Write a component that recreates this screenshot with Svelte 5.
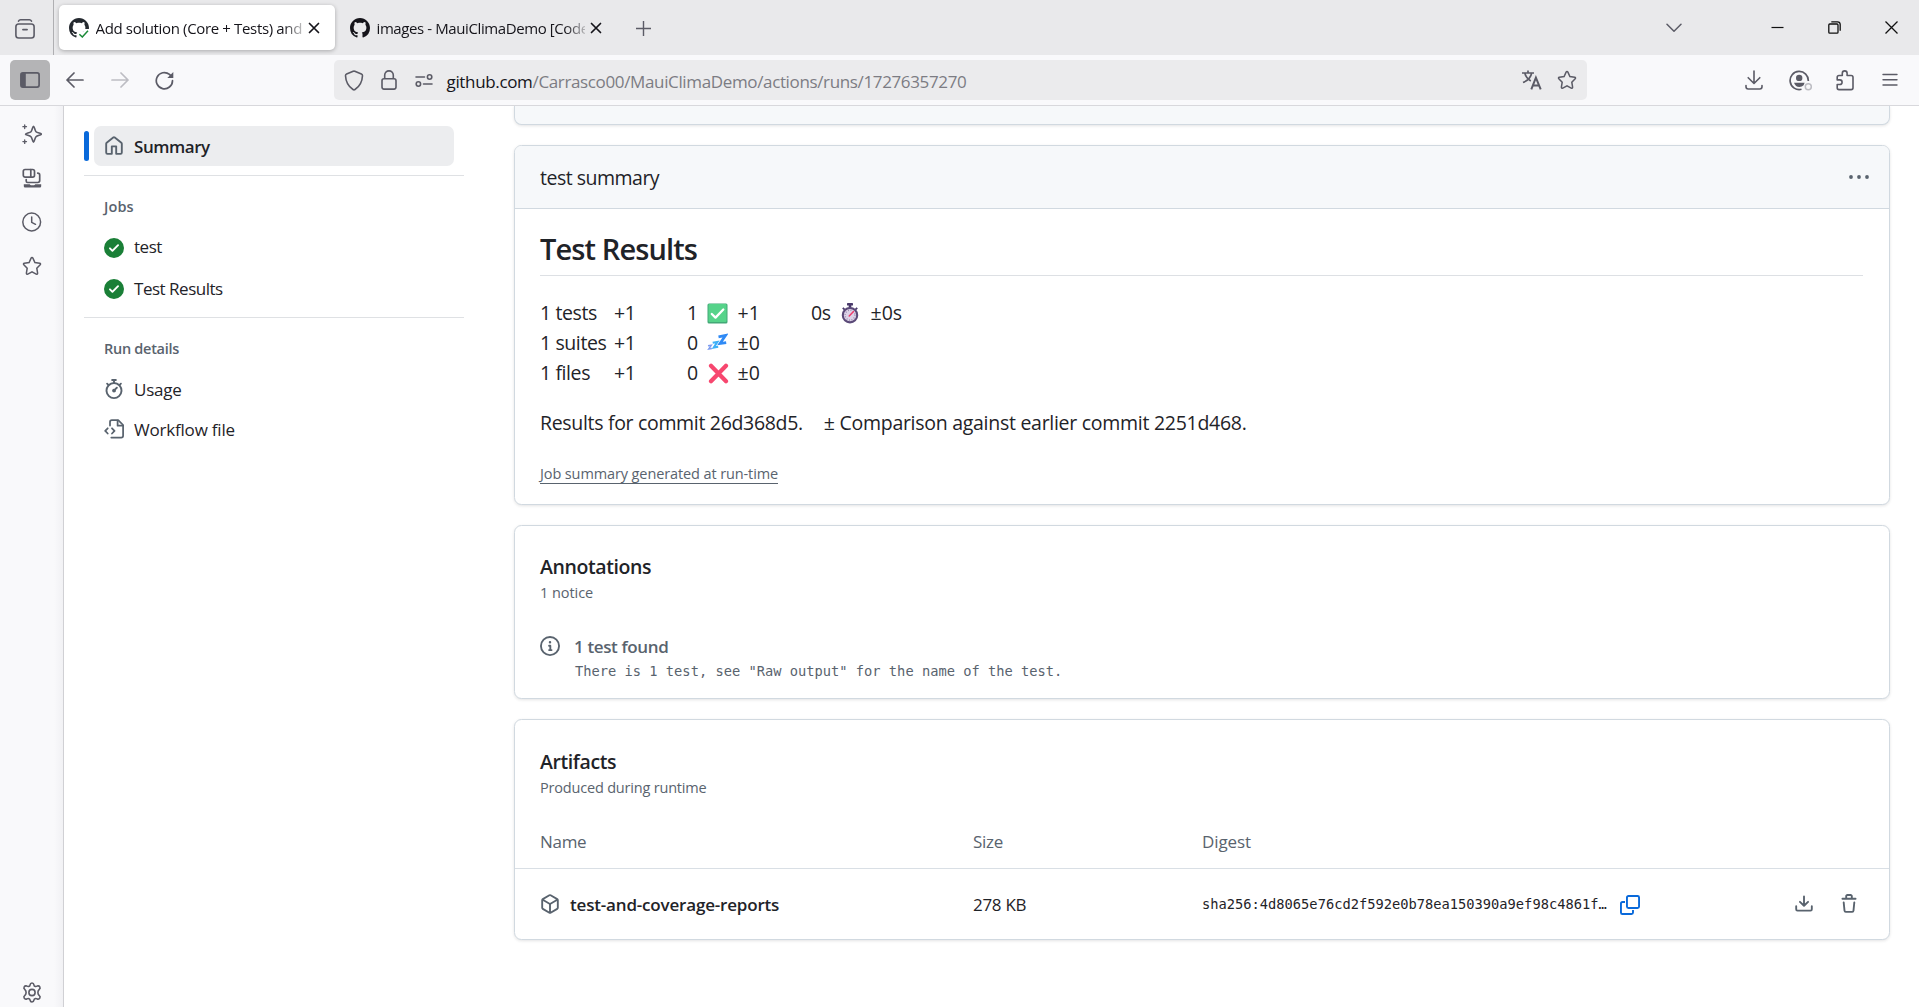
<script>
  const jobs = ['test', 'Test Results'];
  const results = [
    { label: '1 tests', delta: '+1', count: '1', icon: 'check', diff: '+1' },
    { label: '1 suites', delta: '+1', count: '0', icon: 'zzz', diff: '±0' },
    { label: '1 files', delta: '+1', count: '0', icon: 'cross', diff: '±0' }
  ];
  const starPath =
    'M10 1.6c.4 0 .7.2.9.6l2 4.3 4.8.7c.8.1 1.1 1 .5 1.6l-3.4 3.4.8 4.9c.1.8-.7 1.3-1.4 1L10 15.8l-4.2 2.3c-.7.3-1.5-.2-1.4-1l.8-4.9L1.8 8.8c-.6-.6-.3-1.5.5-1.6l4.8-.7 2-4.3c.2-.4.5-.6.9-.6z';
  const markPath =
    'M8 0c4.42 0 8 3.58 8 8a8.013 8.013 0 0 1-5.45 7.59c-.4.08-.55-.17-.55-.38 0-.27.01-1.13.01-2.2 0-.75-.25-1.23-.54-1.48 1.78-.2 3.65-.88 3.65-3.95 0-.88-.31-1.59-.82-2.15.08-.2.36-1.02-.08-2.12 0 0-.67-.22-2.2.82-.64-.18-1.32-.27-2-.27-.68 0-1.36.09-2 .27-1.53-1.03-2.2-.82-2.2-.82-.44 1.1-.16 1.92-.08 2.12-.51.56-.82 1.28-.82 2.15 0 3.06 1.86 3.75 3.64 3.95-.23.2-.44.55-.51 1.07-.46.21-1.61.55-2.33-.66-.15-.24-.6-.83-1.23-.82-.67.01-.27.38.01.53.34.19.73.9.82 1.13.16.45.68 1.31 2.69.94 0 .67.01 1.3.01 1.49 0 .21-.15.45-.55.38A7.995 7.995 0 0 1 0 8c0-4.42 3.58-8 8-8Z';
</script>

{#snippet closeX()}
  <svg class="tab-close" width="12" height="12" viewBox="0 0 12 12" fill="none" stroke="#15141a" stroke-width="1.7" stroke-linecap="round">
    <path d="M1.5 1.5l9 9M10.5 1.5l-9 9" />
  </svg>
{/snippet}

{#snippet emoji(name)}
  {#if name === 'check'}
    <svg width="21" height="21" viewBox="0 0 21 21">
      <rect x=".5" y=".5" width="20" height="20" rx="1.5" fill="#43a877" />
      <rect x="1.5" y="1" width="18" height="18" rx="1" fill="#56d38a" />
      <path d="M4.8 11l3.700 3.600L16.300 6.500" fill="none" stroke="#fff" stroke-width="2.3" stroke-linecap="round" stroke-linejoin="round" />
    </svg>
  {:else if name === 'zzz'}
    <svg width="21" height="21" viewBox="0 0 21 21" fill="none" stroke-linejoin="miter">
      <path d="M11.500 3.900l7-1.400-5.500 8 6.200-.9" stroke="#2f8af5" stroke-width="2.700" />
      <path d="M5.700 9.800l4.700-.9-3.600 5.600 4.400-.7" stroke="#3fb0f7" stroke-width="2.100" />
      <path d="M1 12.800l3.200-.5-2.500 3.700 3.200-.4" stroke="#7d9df0" stroke-width="1.500" />
    </svg>
  {:else if name === 'cross'}
    <svg class="cross" width="21" height="21" viewBox="0 0 21 21" fill="none" stroke="#f7476f" stroke-width="4.2" stroke-linecap="round">
      <path d="M3 2.800l15 15.500M18 2.800l-15 15.500" />
    </svg>
  {:else}
    <svg width="18" height="21" viewBox="0 0 18 21">
      <rect x="6" y="0" width="6" height="2.6" rx=".6" fill="#4a3a6b" />
      <rect x="7.7" y="2" width="2.6" height="3" fill="#4a3a6b" />
      <path d="M1.800 4.800l2 2M16.200 4.800l-2 2" stroke="#4a3a6b" stroke-width="1.8" />
      <circle cx="9" cy="12.2" r="7.2" fill="#ddd3e8" stroke="#5b4a78" stroke-width="2.100" />
      <circle cx="9" cy="12.2" r="4.9" fill="none" stroke="#8d7fa3" stroke-width="1.3" stroke-dasharray=".8 1.766" />
      <path d="M8.200 13L12.500 8.600" stroke="#ee3d6b" stroke-width="1.5" stroke-linecap="round" />
    </svg>
  {/if}
{/snippet}

<div class="window">
  <header class="tabbar">
    <div class="view-slot">
      <svg width="20" height="20" viewBox="0 0 20 20" fill="none" stroke="#5b5b66" stroke-width="1.6" stroke-linecap="round">
        <path d="M3.500 2.200q.8-1.400 2-1.400h9q1.200 0 2 1.400" />
        <rect x=".9" y="5" width="18.2" height="14" rx="2.8" />
        <path d="M8 10.600h4" stroke-width="1.9" />
      </svg>
    </div>
    <div class="tab active">
      <svg class="favicon" width="20" height="20" viewBox="0 0 20 20">
        <g transform="scale(1.25)"><path d={markPath} fill="#24292f" /></g>
        <path d="M11 20V13.500h3.500V11H20v9z" fill="#fff" />
        <path d="M10.400 16.300l2.900 2.700 5.700-6.200" fill="none" stroke="#1a8a37" stroke-width="1.5" />
      </svg>
      <span class="tab-label">Add solution (Core + Tests) and</span>
      {@render closeX()}
    </div>
    <div class="tab other">
      <svg class="favicon" width="20" height="20" viewBox="0 0 16 16"><path d={markPath} fill="#15141a" /></svg>
      <span class="tab-label second">images - MauiClimaDemo [Code</span>
      {@render closeX()}
    </div>
    <svg class="new-tab" width="15" height="15" viewBox="0 0 15 15" stroke="#5b5b66" stroke-width="1.4"><path d="M7.500 0v15M0 7.500h15" /></svg>
    <div class="window-controls">
      <svg class="chevron" width="16" height="10" viewBox="0 0 16 10" fill="none" stroke="#5b5b66" stroke-width="1.5" stroke-linecap="round" stroke-linejoin="round"><path d="M1 1.300l7 7 7-7" /></svg>
      <svg width="13" height="13" viewBox="0 0 13 13" stroke="#111" stroke-width="1.2"><path d="M.5 6.500h12" /></svg>
      <svg width="13" height="13" viewBox="0 0 13 13" fill="none" stroke="#111" stroke-width="1.3">
        <rect x=".8" y="3" width="9.2" height="9.2" rx="1" />
        <path d="M3.300.8h6.200q2.700 0 2.700 2.700v6.200" />
      </svg>
      <svg width="13" height="13" viewBox="0 0 13 13" stroke="#111" stroke-width="1.3"><path d="M.5.5l12 12M12.500.5l-12 12" /></svg>
    </div>
  </header>

  <nav class="navbar">
    <button class="side-toggle" aria-label="Sidebar">
      <svg width="20" height="16" viewBox="0 0 20 16">
        <rect x=".9" y=".9" width="18.2" height="14.2" rx="2" fill="none" stroke="#5b5b66" stroke-width="1.7" />
        <path d="M1 1h4.800v14H1z" fill="#5b5b66" />
      </svg>
    </button>
    <svg class="back" width="18" height="16" viewBox="0 0 18 16" fill="none" stroke="#5b5b66" stroke-width="1.7" stroke-linecap="round" stroke-linejoin="round"><path d="M8 1L1 8l7 7M1 8h16" /></svg>
    <svg class="forward" width="18" height="16" viewBox="0 0 18 16" fill="none" stroke="#bdbdc3" stroke-width="1.7" stroke-linecap="round" stroke-linejoin="round"><path d="M10 1l7 7-7 7M17 8H1" /></svg>
    <svg class="reload" width="19" height="19" viewBox="0 0 19 19" fill="none" stroke="#5b5b66" stroke-width="1.7" stroke-linecap="round">
      <path d="M17.500 9.700a8.100 8.100 0 1 1-3-6.300l2 2" />
      <path d="M18.300 1v6h-6z" fill="#5b5b66" stroke="none" />
    </svg>
    <div class="urlbar">
      <svg class="shield" width="20" height="21" viewBox="0 0 20 21" fill="none" stroke="#5b5b66" stroke-width="1.6" stroke-linejoin="round">
        <path d="M10 1.100c.3 0 .5.1.8.2l6.600 2.800c.7.3 1.100.9 1.100 1.600C18.200 12 15.500 16.500 11 19.500c-.6.4-1.400.4-2 0C4.500 16.500 1.800 12 1.500 5.700c0-.7.4-1.300 1.100-1.600l6.600-2.800c.3-.1.5-.2.8-.2z" />
      </svg>
      <svg class="lock" width="16" height="20" viewBox="0 0 16 20" fill="none" stroke="#5b5b66" stroke-width="1.6">
        <rect x="1" y="8.7" width="14" height="10.4" rx="2" />
        <path d="M3.700 8.700V5.200a4.300 4.300 0 0 1 8.600 0v3.500" />
      </svg>
      <svg class="perms" width="18" height="13" viewBox="0 0 18 13" fill="none" stroke="#5b5b66" stroke-width="1.6" stroke-linecap="round">
        <path d="M1 3h8.500M8.500 10H17" />
        <circle cx="14.6" cy="3" r="2.2" /><circle cx="3.4" cy="10" r="2.2" />
      </svg>
      <span class="host">github.com</span><span class="path">/Carrasco00/MauiClimaDemo/actions/runs/17276357270</span>
      <span class="grow"></span>
      <svg class="translate" width="20" height="20" viewBox="0 0 20 20" fill="none" stroke="#5b5b66" stroke-width="1.7">
        <path d="M0 3h12M6 .5V3M9.700 3C8.800 7.500 5.500 10.800 1 12.500M2.800 3c.9 3.700 3 6.300 6 8" />
        <path d="M9.300 19.300l4.600-11.600 4.800 11.600M11 15.500h6.200" stroke-width="2" />
      </svg>
      <svg class="star" width="20" height="20" viewBox="0 0 20 20" fill="none" stroke="#5b5b66" stroke-width="1.5"><path d={starPath} /></svg>
    </div>
    <div class="nav-actions">
      <svg width="18" height="20" viewBox="0 0 18 20" fill="none" stroke="#5b5b66" stroke-width="1.6" stroke-linecap="round" stroke-linejoin="round">
        <path d="M9 1v12M3.200 7.700L9 13.500l5.800-5.800M1 15.500v1.300q0 2.200 2.200 2.200h11.600q2.200 0 2.200-2.200v-1.300" />
      </svg>
      <svg class="account" width="24" height="21" viewBox="0 0 24 21">
        <path d="M12.500 19.300A9.100 9.100 0 1 1 19.300 11" fill="none" stroke="#5b5b66" stroke-width="1.7" />
        <circle cx="10.2" cy="7.9" r="3.2" fill="#5b5b66" />
        <path d="M5 12.800h10.600q-.4 1.200-1 2.500-1.500 1.700-4.300 1.700-3.800 0-5.300-4.200z" fill="#5b5b66" />
        <circle cx="19.3" cy="16.7" r="3" fill="none" stroke="#bdbdc3" stroke-width="1.5" />
      </svg>
      <svg class="puzzle" width="18" height="21" viewBox="0 0 18 21" fill="none" stroke="#5b5b66" stroke-width="1.6" stroke-linejoin="round">
        <path d="M6.300 5.500V3.300a2.400 2.400 0 0 1 4.800 0v2.200h4.100q1.800 0 1.800 1.800v10.500q0 1.800-1.800 1.800H3q-1.800 0-1.800-1.800v-3.300h2.600a2.300 2.300 0 0 0 0-4.600H1.200V7.300q0-1.800 1.800-1.800z" />
      </svg>
      <svg class="menu" width="16" height="14" viewBox="0 0 16 14" stroke="#5b5b66" stroke-width="1.4" stroke-linecap="round"><path d="M1 1.500h14M1 6.700h14M1 12h14" /></svg>
    </div>
  </nav>

  <div class="body">
    <aside class="rail">
      <svg width="20" height="20" viewBox="0 0 20 20" fill="none" stroke="#5b5b66" stroke-width="1.6" stroke-linecap="round" stroke-linejoin="round">
        <path d="M11.500 2.200c.9 0 1.300 4.300 2.500 5.500s5.500 1.600 5.500 2.500-4.300 1.300-5.500 2.500-1.600 5.500-2.500 5.500-1.300-4.300-2.500-5.500-5.500-1.600-5.500-2.500S7.800 8.900 9 7.700s1.600-5.500 2.500-5.500z" />
        <path d="M2.700.9v3.600M.9 2.700h3.600M2.700 15.800v3.600M.9 17.600h3.600" stroke-width="1.3" />
      </svg>
      <svg width="20" height="20" viewBox="0 0 20 20" fill="none" stroke="#5b5b66" stroke-width="1.7" stroke-linecap="round">
        <rect x="1.3" y="1.5" width="11.2" height="7.6" rx="1.8" />
        <path d="M8.800 1.500v7.600M4.200 11.500v1.600q0 1.400 1.400 1.400h10.200q1.900 0 1.900-1.900V7q0-1.900-2-1.900" />
        <path d="M1.800 16.300h6q.5.900 1.300.9h2.800q.8 0 1.300-.9h6v2q0 1.200-1.200 1.200H3q-1.200 0-1.200-1.200z" fill="#5b5b66" stroke="none" />
      </svg>
      <svg width="20" height="20" viewBox="0 0 20 20" fill="none" stroke="#5b5b66" stroke-width="1.5" stroke-linecap="round">
        <circle cx="9.7" cy="10" r="8.9" /><path d="M9.700 5v5.300l3.800 2" />
      </svg>
      <svg width="20" height="20" viewBox="0 0 20 20" fill="none" stroke="#5b5b66" stroke-width="1.5"><path d={starPath} /></svg>
      <span class="grow"></span>
      <svg class="gear" width="20" height="21" viewBox="0 0 20 21" fill="none" stroke="#5b5b66" stroke-width="1.6" stroke-linejoin="round">
        <path d="M8.100 2.800Q8.300 1 10 1t1.900 1.800q.2 1.500 1.500 1.600.7.200 1.700-.3 1.800-.7 2.700.8t-.7 2.700q-1.200 1.100-1.200 2.900t1.200 2.900q1.600 1.200.7 2.700t-2.700.8q-1-.5-1.700-.3-1.300.1-1.500 1.600Q11.700 20 10 20t-1.900-1.800q-.2-1.500-1.500-1.600-.7-.2-1.700.3-1.800.7-2.700-.8t.7-2.700q1.200-1.100 1.200-2.900T2.900 7.600q-1.600-1.200-.7-2.700t2.700-.8q1 .5 1.700.3 1.300-.1 1.500-1.600z" />
        <circle cx="10" cy="10.5" r="3.1" />
      </svg>
    </aside>

    <div class="page">
      <aside class="menu-col">
        <div class="summary-row">
          <span class="marker"></span>
          <div class="summary-item">
            <svg width="20" height="20" viewBox="0 0 16 16" fill="#59636e"><path d="M6.906.664a1.749 1.749 0 0 1 2.187 0l5.250 4.200c.415.332.657.835.657 1.367v7.019A1.750 1.750 0 0 1 13.250 15h-3.500a.75.75 0 0 1-.75-.75V9H7v5.250a.75.75 0 0 1-.75.75h-3.500A1.750 1.750 0 0 1 1 13.250V6.230c0-.531.242-1.034.657-1.366l5.250-4.200Zm1.250 1.171a.25.25 0 0 0-.312 0l-5.250 4.200a.25.25 0 0 0-.094.196v7.019c0 .138.112.25.25.25H5.500V8.250a.75.75 0 0 1 .75-.75h3.500a.75.75 0 0 1 .75.75v5.250h2.750a.25.25 0 0 0 .25-.25V6.230a.25.25 0 0 0-.094-.195Z" /></svg>
            <span class="item bold">Summary</span>
          </div>
        </div>
        <hr />
        <h4>Jobs</h4>
        {#each jobs as job}
          <div class="nav-item job">
            <svg width="20" height="20" viewBox="0 0 16 16" fill="#1a7f37"><path d="M8 16A8 8 0 1 1 8 0a8 8 0 0 1 0 16Zm3.780-9.720a.751.751 0 0 0-.018-1.042.751.751 0 0 0-1.042-.018L6.750 9.190 5.280 7.720a.751.751 0 0 0-1.042.018.751.751 0 0 0-.018 1.042l2 2a.75.75 0 0 0 1.060 0Z" /></svg>
            <span class="item job-name">{job}</span>
          </div>
        {/each}
        <hr class="second-rule" />
        <h4 class="run">Run details</h4>
        <div class="nav-item detail">
          <svg class="raised" width="20" height="20" viewBox="0 0 16 16" fill="#59636e"><path d="M5.750.75A.75.75 0 0 1 6.500 0h3a.75.75 0 0 1 0 1.500h-.75v1l-.001.041a6.724 6.724 0 0 1 3.464 1.435l.007-.006.75-.75a.749.749 0 0 1 1.275.326.749.749 0 0 1-.215.734l-.75.75-.006.007a6.750 6.750 0 1 1-10.548 0L2.720 5.030l-.75-.75a.751.751 0 0 1 .018-1.042.751.751 0 0 1 1.042-.018l.75.75.007.006A6.720 6.720 0 0 1 7.250 2.541V1.500H6.500a.75.75 0 0 1-.75-.75ZM8 14.500a5.250 5.250 0 1 0-.001-10.501A5.250 5.250 0 0 0 8 14.500Zm.389-6.700 1.330-1.330a.75.75 0 1 1 1.061 1.060L9.450 8.861A1.503 1.503 0 0 1 8 10.750a1.499 1.499 0 1 1 .389-2.950Z" /></svg>
          <span class="item">Usage</span>
        </div>
        <div class="nav-item detail">
          <svg class="raised" width="20" height="20" viewBox="0 0 20 20" fill="none" stroke="#59636e" stroke-width="1.75" stroke-linecap="round" stroke-linejoin="round">
            <path d="M6 6.500V3q0-1.900 1.900-1.900h6.300l4.900 4.900v10.700q0 1.900-1.900 1.900H7.300" />
            <path d="M13.600 1.500v5.200h5.200M3.700 9.300L1.200 11.900l2.500 2.600M8 9.300l2.500 2.600L8 14.500" />
          </svg>
          <span class="item">Workflow file</span>
        </div>
      </aside>

      <main>
        <section class="card clipped"></section>

        <section class="card results">
          <div class="card-head">
            <span class="t20 head-title">test summary</span>
            <svg width="20" height="20" viewBox="0 0 20 20" fill="#59636e"><circle cx="2" cy="10" r="1.9" /><circle cx="10" cy="10" r="1.9" /><circle cx="18" cy="10" r="1.9" /></svg>
          </div>
          <div class="card-body">
            <h2>Test Results</h2>
            <div class="stats">
              {#each results as row, i}
                <div class="stat t20">
                  <span>{row.label}</span>
                  <span>{row.delta}</span>
                  <span>{row.count}</span>
                  {@render emoji(row.icon)}
                  <span class="diff">{row.diff}</span>
                  {#if i === 0}
                    <span>0s</span>
                    {@render emoji('watch')}
                    <span class="diff">±0s</span>
                  {/if}
                </div>
              {/each}
            </div>
            <p class="t20 commits"><span>Results for commit 26d368d5.</span><span class="comparison">± Comparison against earlier commit 2251d468.</span></p>
            <div class="generated"><span>Job summary generated at run-time</span></div>
          </div>
        </section>

        <section class="card annotations">
          <h3>Annotations</h3>
          <p class="sub notice">1 notice</p>
          <div class="found">
            <svg width="20" height="20" viewBox="0 0 16 16" fill="#59636e"><path d="M0 8a8 8 0 1 1 16 0A8 8 0 0 1 0 8Zm8-6.500a6.500 6.500 0 1 0 0 13 6.500 6.500 0 0 0 0-13ZM6.500 7.750A.75.75 0 0 1 7.250 7h1a.75.75 0 0 1 .75.75v2.750h.25a.75.75 0 0 1 0 1.500h-2a.75.75 0 0 1 0-1.500h.25v-2h-.25a.75.75 0 0 1-.75-.75ZM8 6a1 1 0 1 1 0-2 1 1 0 0 1 0 2Z" /></svg>
            <strong>1 test found</strong>
          </div>
          <code class="message">There is 1 test, see "Raw output" for the name of the test.</code>
        </section>

        <section class="card artifacts">
          <h3>Artifacts</h3>
          <p class="sub">Produced during runtime</p>
          <div class="row row-head"><span>Name</span><span>Size</span><span class="digest-title">Digest</span></div>
          <div class="row">
            <div class="artifact">
              <svg width="20" height="20" viewBox="0 0 16 16" fill="#59636e"><path d="m8.878.392 5.250 3.045c.54.314.872.89.872 1.514v6.098a1.750 1.750 0 0 1-.872 1.514l-5.250 3.045a1.750 1.750 0 0 1-1.756 0l-5.250-3.045A1.750 1.750 0 0 1 1 11.049V4.951c0-.624.332-1.201.872-1.514L7.122.392a1.750 1.750 0 0 1 1.756 0ZM7.875 1.690l-4.630 2.685L8 7.133l4.755-2.758-4.630-2.685a.248.248 0 0 0-.25 0ZM2.500 5.677v5.372c0 .09.047.171.125.216l4.625 2.683V8.432Zm6.250 8.271 4.625-2.683a.25.25 0 0 0 .125-.216V5.677L8.750 8.432Z" /></svg>
              <strong>test-and-coverage-reports</strong>
            </div>
            <span>278 KB</span>
            <div class="digest">
              <code>sha256:4d8065e76cd2f592e0b78ea150390a9ef98c4861f…</code>
              <svg class="copy" width="20" height="20" viewBox="0 0 20 20" fill="none" stroke="#0969da" stroke-width="1.9">
                <rect x="6.95" y=".95" width="12.1" height="12.1" rx="1.5" />
                <path d="M5 7H2.500Q.95 7 .95 8.500v9q0 1.550 1.500 1.550h9q1.550 0 1.550-1.500V15" />
              </svg>
            </div>
            <div class="row-actions">
              <svg width="20" height="20" viewBox="0 0 16 16" fill="#59636e">
                <path d="M2.750 14A1.750 1.750 0 0 1 1 12.250v-2.500a.75.75 0 0 1 1.500 0v2.500c0 .138.112.25.25.25h10.500a.25.25 0 0 0 .25-.25v-2.500a.75.75 0 0 1 1.500 0v2.500A1.750 1.750 0 0 1 13.250 14Z" />
                <path d="M7.250 7.689V2a.75.75 0 0 1 1.500 0v5.689l1.970-1.969a.749.749 0 1 1 1.060 1.060l-3.250 3.250a.749.749 0 0 1-1.060 0L4.220 6.780a.749.749 0 1 1 1.060-1.060l1.970 1.969Z" />
              </svg>
              <svg width="20" height="20" viewBox="0 0 16 16" fill="#59636e"><path d="M11 1.750V3h2.250a.75.75 0 0 1 0 1.500H2.750a.75.75 0 0 1 0-1.500H5V1.750C5 .784 5.784 0 6.750 0h2.500C10.216 0 11 .784 11 1.750ZM4.496 6.675l.66 6.600a.25.25 0 0 0 .249.225h5.190a.25.25 0 0 0 .249-.225l.66-6.600a.75.75 0 0 1 1.492.149l-.66 6.600A1.748 1.748 0 0 1 10.595 15h-5.190a1.750 1.750 0 0 1-1.741-1.575l-.66-6.600a.75.75 0 1 1 1.492-.15ZM6.500 1.750V3h3V1.750a.25.25 0 0 0-.25-.25h-2.500a.25.25 0 0 0-.25.25Z" /></svg>
            </div>
          </div>
        </section>
      </main>
    </div>
  </div>
</div>

<style>
  :global(body) { margin: 0; overflow: hidden; }
  .window {
    display: flex; flex-direction: column; width: 100vw; height: 100vh; overflow: hidden;
    background: #f9f9fb; color: #1f2328; font-family: 'Open Sans', 'Noto Sans', sans-serif; font-size: 17px;
  }
  .window, .window :global(*) { box-sizing: border-box; }
  svg { display: block; flex: none; }
  p, h2, h3, h4 { margin: 0; }
  .grow { flex: 1; }

  .tabbar { display: flex; height: 55px; flex: none; background: #e9e9eb; }
  .view-slot { width: 54px; padding: 19px 0 0 15px; border-right: 1px solid #afafb2; }
  .tab { display: flex; align-items: center; width: 276px; height: 45px; margin: 5px 0 0 5px; padding: 0 15px 0 10px; border-radius: 5px; color: #15141a; }
  .tab.active { background: #fff; box-shadow: 0 1px 4px rgba(0, 0, 0, 0.28); }
  .tab.other { width: 277px; }
  .favicon { margin-top: 1px; }
  .tab-label {
    flex: 1; margin-left: 6.5px; overflow: hidden; white-space: nowrap; font-size: 15px; letter-spacing: -0.35px; line-height: 24px;
    mask-image: linear-gradient(to right, #000 calc(100% - 20px), transparent calc(100% + 6px));
  }
  .second { letter-spacing: -0.4px; }
  .tab-close { margin-left: 5px; }
  .new-tab { margin: 21px 0 0 19px; }
  .window-controls { display: flex; flex: 1; justify-content: flex-end; align-items: center; gap: 44px; padding-right: 21px; }
  .chevron { margin-right: 45px; }

  .navbar { display: flex; align-items: center; height: 51px; flex: none; padding-left: 10px; border-bottom: 1px solid #d8d8dc; }
  .side-toggle { display: flex; align-items: center; justify-content: center; width: 40px; height: 40px; padding: 0; border: 0; border-radius: 5px; background: #b4b4b6; }
  .back { margin-left: 16px; }
  .forward { margin-left: 27px; }
  .reload { margin-left: 26px; }
  .urlbar { display: flex; align-items: center; width: 1253px; height: 40px; margin-left: 160px; padding: 0 10px; border-radius: 5px; background: #ebebed; white-space: pre; }
  .lock { margin-left: 17px; }
  .perms { margin-left: 18px; }
  .host { margin: 2px 0 0 13.5px; color: #15141a; letter-spacing: -0.34px; }
  .path { margin-top: 2px; color: #7c7c83; letter-spacing: -0.36px; }
  .star { margin-left: 15px; }
  .nav-actions { display: flex; align-items: center; margin-left: 158px; }
  .account { margin-left: 26px; }
  .puzzle { margin-left: 23px; }
  .menu { margin-left: 28px; }

  .body { display: flex; flex: 1; min-height: 0; }
  .rail { display: flex; flex-direction: column; align-items: center; gap: 24px; width: 63px; padding: 18px 0 4px 1px; background: linear-gradient(to right, #f9f9fb 54px, #f1f1f4); }
  .page { display: flex; flex: 1; border-left: 1px solid #d0d0d4; background: #fff; overflow: hidden; }

  .menu-col { width: 450px; flex: none; padding: 20px 0 0 20px; }
  .summary-row { display: flex; align-items: center; }
  .marker { width: 5px; height: 30px; border-radius: 3px; background: #0969da; }
  .summary-item { display: flex; align-items: center; width: 360px; height: 40px; margin-left: 5px; padding: 0 10px; border-radius: 7px; background: #ecedef; }
  .item { margin-left: 10px; letter-spacing: -0.2px; line-height: 40px; }
  .bold { padding-top: 1px; font-weight: 600; letter-spacing: -0.45px; }
  hr { width: 380px; height: 1px; margin: 9px 0 0; border: 0; background: #dfe1e4; }
  h4 { margin-left: 20px; padding-top: 20px; font-size: 14.5px; line-height: 22px; font-weight: 600; letter-spacing: 0.1px; color: #59636e; }
  .nav-item { display: flex; align-items: center; height: 40px; padding-left: 20px; }
  .job { height: 41.5px; }
  h4 + .job { margin-top: 9px; }
  .job-name { padding-bottom: 1px; letter-spacing: -0.48px; }
  .second-rule { margin-top: 7px; }
  .run { letter-spacing: -0.28px; margin-bottom: 9px; }
  .detail .item { padding-top: 1px; }
  .raised { margin-bottom: 1px; }

  main { width: 1376px; }
  .card { border: 1px solid #d1d9e0; border-radius: 7.5px; background: #fff; box-shadow: 0 1px 3px rgba(31, 35, 40, 0.12); overflow: hidden; margin-bottom: 20px; }
  .clipped { height: 19px; border-top: 0; border-radius: 0 0 7.5px 7.5px; background: #f6f8fa; }
  .t20 { font-size: 19.5px; letter-spacing: -0.32px; line-height: 30px; }
  .head-title { padding-top: 2px; letter-spacing: -0.5px; }
  .card-head { display: flex; align-items: center; justify-content: space-between; height: 63px; padding: 0 20px 0 25px; border-bottom: 1px solid #d1d9e0; background: #f6f8fa; }
  .results { height: 360px; }
  .card-body { padding: 19px 26px 0 25px; }
  h2 { padding-bottom: 6px; border-bottom: 1px solid #dde0e4; font-size: 29px; line-height: 41px; font-weight: 600; letter-spacing: -0.88px; }
  .stats { margin-top: 22px; }
  .stat { display: grid; grid-template-columns: 74px 73px 19.5px 31px 73.5px 30px 29.5px auto; align-items: center; justify-content: start; height: 30px; letter-spacing: -0.4px; }
  .diff { letter-spacing: 0; }
  .cross { margin-left: 1px; }
  .commits { display: flex; gap: 21px; margin-top: 20px; }
  .comparison { letter-spacing: -0.28px; }
  .generated { display: flex; margin-top: 25px; }
  .generated span { height: 21px; padding-top: 1px; border-bottom: 1px solid #59636e; color: #59636e; font-size: 14.5px; line-height: 20px; letter-spacing: -0.11px; }

  h3 { padding-left: 25px; font-size: 19.5px; line-height: 30px; font-weight: 600; letter-spacing: -0.4px; }
  .sub { padding-left: 25px; color: #59636e; font-size: 14.5px; line-height: 24px; letter-spacing: -0.19px; }
  .notice { margin-top: -1px; letter-spacing: -0.05px; }
  .annotations { height: 174px; padding-top: 26px; }
  .found { display: flex; align-items: center; gap: 14px; height: 26px; margin-top: 28px; padding-left: 25px; color: #59636e; letter-spacing: -0.37px; }
  strong { font-weight: 600; }
  code { font-family: 'DejaVu Sans Mono', monospace; font-size: 13.72px; }
  .message { display: block; margin: 2px 0 0 60px; line-height: 20px; color: #59636e; }

  .artifacts { height: 221px; padding-top: 27px; margin-bottom: 0; }
  .artifacts .sub { margin-top: -1px; }
  .row { display: grid; grid-template-columns: 433px 229px 1fr auto; align-items: center; height: 70px; padding: 0 30px 0 25px; letter-spacing: -0.3px; }
  .row-head { height: 54px; margin-top: 15px; border-bottom: 1px solid #d9dfe5; color: #59636e; }
  .digest-title { letter-spacing: -0.1px; }
  .artifact, .digest, .row-actions { display: flex; align-items: center; }
  .artifact { gap: 10px; letter-spacing: -0.18px; }
  .digest { gap: 13px; letter-spacing: 0; }
  .copy { margin-top: 2px; }
  .row-actions { gap: 25px; }
</style>
